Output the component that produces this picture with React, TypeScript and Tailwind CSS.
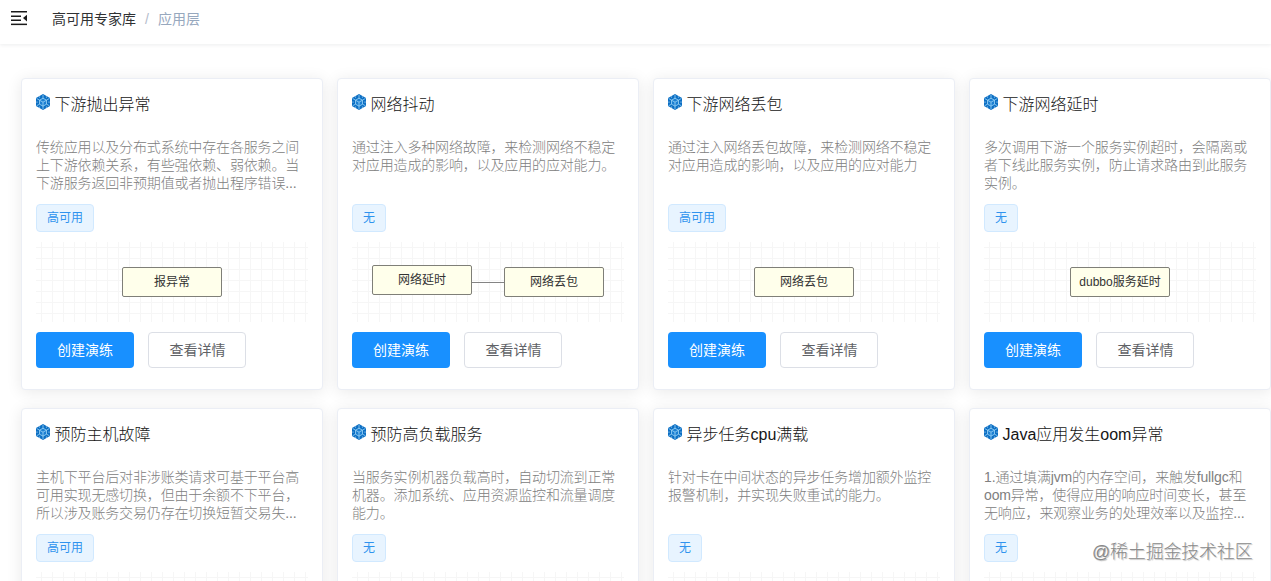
type Node = { label: string; className: string };

type Practice = {
  title: string;
  lines: string[];
  tag: string;
  nodes: Node[];
  linked?: boolean;
};

const single = 'left-[86px] top-[25px]';

const practices: Practice[] = [
  {
    title: '下游抛出异常',
    lines: ['传统应用以及分布式系统中存在各服务之间', '上下游依赖关系，有些强依赖、弱依赖。当', '下游服务返回非预期值或者抛出程序错误...'],
    tag: '高可用',
    nodes: [{ label: '报异常', className: single }],
  },
  {
    title: '网络抖动',
    lines: ['通过注入多种网络故障，来检测网络不稳定', '对应用造成的影响，以及应用的应对能力。'],
    tag: '无',
    nodes: [
      { label: '网络延时', className: 'left-[20px] top-[23px]' },
      { label: '网络丢包', className: 'left-[152px] top-[25px]' },
    ],
    linked: true,
  },
  {
    title: '下游网络丢包',
    lines: ['通过注入网络丢包故障，来检测网络不稳定', '对应用造成的影响，以及应用的应对能力'],
    tag: '高可用',
    nodes: [{ label: '网络丢包', className: single }],
  },
  {
    title: '下游网络延时',
    lines: ['多次调用下游一个服务实例超时，会隔离或', '者下线此服务实例，防止请求路由到此服务', '实例。'],
    tag: '无',
    nodes: [{ label: 'dubbo服务延时', className: single }],
  },
  {
    title: '预防主机故障',
    lines: ['主机下平台后对非涉账类请求可基于平台高', '可用实现无感切换，但由于余额不下平台，', '所以涉及账务交易仍存在切换短暂交易失...'],
    tag: '高可用',
    nodes: [],
  },
  {
    title: '预防高负载服务',
    lines: ['当服务实例机器负载高时，自动切流到正常', '机器。添加系统、应用资源监控和流量调度', '能力。'],
    tag: '无',
    nodes: [],
  },
  {
    title: '异步任务cpu满载',
    lines: ['针对卡在中间状态的异步任务增加额外监控', '报警机制，并实现失败重试的能力。'],
    tag: '无',
    nodes: [],
  },
  {
    title: 'Java应用发生oom异常',
    lines: ['1.通过填满jvm的内存空间，来触发fullgc和', 'oom异常，使得应用的响应时间变长，甚至', '无响应，来观察业务的处理效率以及监控...'],
    tag: '无',
    nodes: [],
  },
];

function FoldIcon() {
  return (
    <svg className="h-[15px] w-4 shrink-0" viewBox="0 0 16 15" fill="#1a1a1a">
      <rect x="0" y="0" width="16" height="1.5" />
      <rect x="0" y="4.5" width="10" height="1.5" />
      <rect x="0" y="8.5" width="10" height="1.5" />
      <rect x="0" y="12.6" width="16" height="1.5" />
      <path d="M16 3.8v6.6l-4-3.3z" />
    </svg>
  );
}

function CubeIcon() {
  return (
    <svg className="h-4 w-[14px] shrink-0" viewBox="0 0 14 16">
      <path d="M7 0l7 4v8l-7 4-7-4V4z" fill="#0c6fc4" />
      <g fill="none" stroke="#a5dbfa" strokeWidth="0.75">
        <path d="M7 4.2l3.5 2v4L7 12.2l-3.5-2v-4z" fill="#1d80d2" />
        <path d="M3.5 6.2L7 8.2l3.5-2M7 8.2v4" />
        <path d="M7 1v3.2M0.5 4.4l3 1.8M13.5 4.4l-3 1.8M0.5 11.8l3-1.6M13.5 11.8l-3-1.6M7 12.2V15" />
      </g>
      <g fill="#d8effd">
        <circle cx="3.6" cy="3" r="0.5" />
        <circle cx="10.4" cy="3" r="0.5" />
        <circle cx="1" cy="8" r="0.6" />
        <circle cx="13" cy="8" r="0.6" />
        <circle cx="3.6" cy="13" r="0.5" />
        <circle cx="10.4" cy="13" r="0.5" />
      </g>
    </svg>
  );
}

function Flow({ nodes, linked }: Pick<Practice, 'nodes' | 'linked'>) {
  return (
    <div className="relative mt-[10px] h-20 w-[272px] bg-[linear-gradient(to_right,#f6f6f6_1px,transparent_1px),linear-gradient(to_bottom,#f6f6f6_1px,transparent_1px)] bg-[size:11px_11px] bg-[position:5px_5px]">
      {linked && <div className="absolute left-[120px] top-[40px] h-px w-8 bg-[#848484]" />}
      {nodes.map((node) => (
        <div
          key={node.label}
          className={`absolute flex h-[30px] w-[100px] items-center justify-center rounded-[2px] border border-[#7f7f78] bg-[#ffffeb] text-xs whitespace-nowrap text-[#333] ${node.className}`}
        >
          {node.label}
        </div>
      ))}
    </div>
  );
}

function Card({ title, lines, tag, nodes, linked }: Practice) {
  return (
    <article className="h-[312px] rounded border border-[#ebeef5] bg-white px-[14px] pt-[15px] shadow-[0_2px_16px_rgba(0,0,0,0.09)]">
      <header className="flex h-5 gap-[4.5px]">
        <CubeIcon />
        <h2 className="text-base leading-[22px] font-light whitespace-nowrap text-[#151515]">{title}</h2>
      </header>
      <div className="mt-6 h-[54px] text-[14px] leading-[18px] font-light tracking-[-0.15px] whitespace-nowrap text-[#808080]">
        {lines.map((line) => (
          <p key={line}>{line}</p>
        ))}
      </div>
      <div className="mt-3 flex">
        <span className="flex h-7 items-center rounded border border-[#d1e9ff] bg-[#e8f4ff] px-[10px] text-xs text-[#2f93ee]">{tag}</span>
      </div>
      <Flow nodes={nodes} linked={linked} />
      {nodes.length > 0 && (
        <div className="mt-[10px] flex gap-[14px] text-sm">
          <button className="h-9 w-[98px] rounded bg-[#1890ff] text-white">创建演练</button>
          <button className="h-9 w-[98px] rounded border border-[#dcdfe6] bg-white pl-px text-[#606266]">查看详情</button>
        </div>
      )}
    </article>
  );
}

export default function App() {
  return (
    <div className="relative h-[581px] w-[1271px] overflow-hidden bg-white font-['Liberation_Sans','Noto_Sans_CJK_SC',sans-serif]">
      <nav className="flex h-11 items-center pb-[7px] pl-[11px] text-sm shadow-[0_1px_4px_rgba(0,21,41,0.08)]">
        <FoldIcon />
        <span className="ml-[25px] text-[#303133]">高可用专家库</span>
        <span className="mx-[9px] text-[#b4bccc]">/</span>
        <span className="text-[#97a8be]">应用层</span>
      </nav>
      <main className="grid grid-cols-[repeat(4,302px)] gap-x-[14px] gap-y-[18px] pt-[34px] pl-[21px]">
        {practices.map((practice) => (
          <Card key={practice.title} {...practice} />
        ))}
      </main>
      <div className="absolute top-[540px] left-[1092px] text-[18px] leading-6 font-light tracking-[-0.2px] whitespace-nowrap text-[#8a8a8a] [text-shadow:-1px_-1px_0_#fff,1px_1px_1px_#bbb]">
        @稀土掘金技术社区
      </div>
    </div>
  );
}
